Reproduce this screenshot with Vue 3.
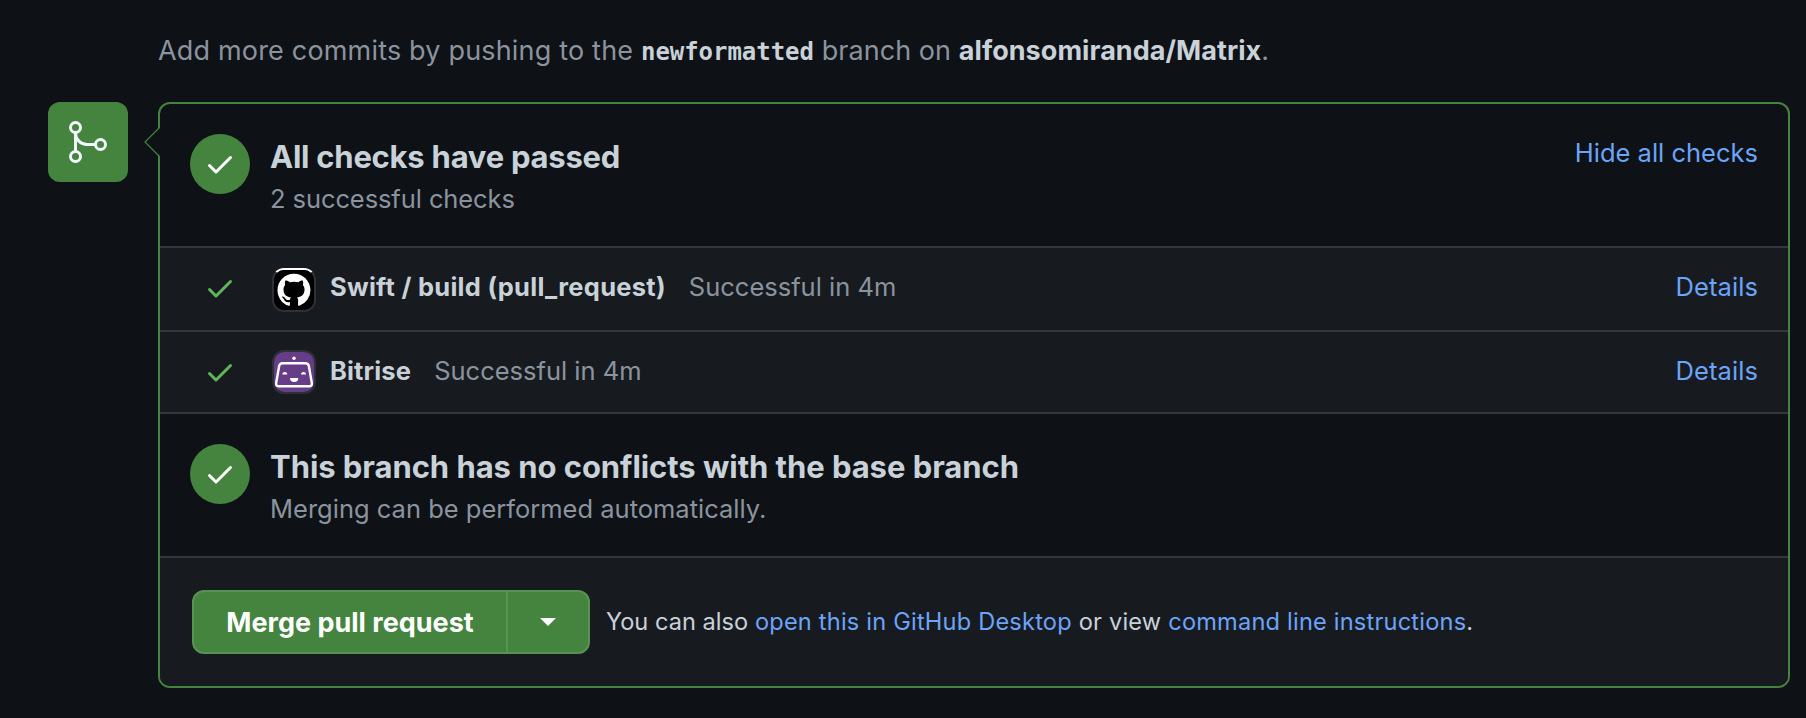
<script setup>
const checks = [
  { name: 'Swift / build (pull_request)', note: 'Successful in 4m', app: 'github' },
  { name: 'Bitrise', note: 'Successful in 4m', app: 'bitrise' },
]
const CHECK =
  'M13.78 4.22a.75.75 0 010 1.06l-7.25 7.25a.75.75 0 01-1.06 0L2.22 9.28a.75.75 0 011.06-1.06L6 10.94l6.72-6.72a.75.75 0 011.06 0z'
</script>

<template>
  <main class="page">
    <p class="push-hint">
      Add more commits by pushing to the&nbsp;<code>newformatted</code>&nbsp;<span class="mid">branch on</span>&nbsp;<strong>alfonsomiranda/Matrix</strong>.
    </p>
    <div class="merge">
      <div class="badge">
        <svg width="48" height="48" viewBox="0 0 24 24" fill="none" stroke="#f3f6fd" stroke-width="1.5">
          <circle cx="5.75" cy="4.75" r="2.5" />
          <circle cx="5.75" cy="19.25" r="2.5" />
          <circle cx="18.25" cy="13.25" r="2.5" />
          <path d="M5.75 7.25v9.5M5.75 7.5c0 3.2 2.6 5.75 5.75 5.75h4.25" />
        </svg>
      </div>
      <section class="box">
        <svg class="notch" width="18" height="32" viewBox="0 0 18 32">
          <path d="M18 1.5H16L1 16l15 14.5h2z" fill="#0e1116" />
          <path d="M15.5 1.5L1 16l14.5 14.5" fill="none" stroke="#45843f" stroke-width="1.2" />
        </svg>
        <div class="status first">
          <span class="circle"><svg width="32" height="32" viewBox="0 0 16 16"><path :d="CHECK" fill="#fff" /></svg></span>
          <div class="copy">
            <h3>All checks have passed</h3>
            <p>2 successful checks</p>
          </div>
          <a class="hide">Hide all checks</a>
        </div>
        <div v-for="c in checks" :key="c.name" class="check" :class="c.app">
          <svg class="tick" width="32" height="32" viewBox="0 0 16 16"><path :d="CHECK" fill="#5fb757" /></svg>
          <span class="avatar">
            <svg v-if="c.app === 'github'" width="40" height="40" viewBox="0 0 40 40">
              <rect width="40" height="40" fill="#000" />
              <path transform="translate(3.5 3.7) scale(2.06)" fill="#fff" d="M8 0C3.580 0 0 3.580 0 8c0 3.540 2.290 6.530 5.470 7.590.4.070.55-.170.55-.380 0-.190-.010-.820-.010-1.490-2.010.370-2.530-.490-2.690-.940-.090-.230-.480-.940-.820-1.130-.280-.150-.680-.520-.010-.530.630-.010 1.080.580 1.230.820.720 1.210 1.870.870 2.330.660.070-.520.280-.870.510-1.070-1.780-.2-3.640-.890-3.640-3.950 0-.870.310-1.590.820-2.150-.080-.2-.360-1.020.080-2.120 0 0 .670-.210 2.200.820.640-.180 1.320-.270 2-.270s1.360.090 2 .270c1.530-1.040 2.200-.820 2.200-.820.440 1.100.160 1.920.080 2.120.510.560.820 1.270.820 2.150 0 3.070-1.870 3.750-3.650 3.950.290.250.540.730.540 1.480 0 1.070-.010 1.930-.010 2.200 0 .210.150.460.550.380A8.010 8.010 0 0016 8c0-4.420-3.580-8-8-8z" />
            </svg>
            <svg v-else width="40" height="40" viewBox="0 0 40 40">
              <rect width="40" height="40" fill="#683d87" />
              <circle cx="20" cy="6.2" r="1.7" fill="#fff" />
              <path d="M8.500 11.200h23c1.900 0 2.900 1 3.300 2.600l3 17c.4 2.300-.6 3.500-2.800 3.500h-30c-2.200 0-3.200-1.200-2.800-3.500l3-17c.4-1.600 1.400-2.600 3.300-2.600z" fill="none" stroke="#fff" stroke-width="2.4" />
              <path d="M8.300 22.500a2.500 2.500 0 015 0M27 22.500a2.500 2.500 0 015 0" fill="#fff" />
              <path d="M16 26h8.300a4.150 4 0 01-8.300 0z" fill="#fff" />
            </svg>
          </span>
          <strong>{{ c.name }}</strong>
          <span class="note">{{ c.note }}</span>
          <a class="details">Details</a>
        </div>
        <div class="status last">
          <span class="circle"><svg width="32" height="32" viewBox="0 0 16 16"><path :d="CHECK" fill="#fff" /></svg></span>
          <div class="copy">
            <h3>This branch has no conflicts with the base branch</h3>
            <p>Merging can be performed automatically.</p>
          </div>
        </div>
        <footer class="actions">
          <div class="group">
            <button class="main-btn" type="button">Merge pull request</button>
            <button class="drop" type="button" aria-label="More"><i class="caret"></i></button>
          </div>
          <p class="also"><span class="you">You can also</span>&nbsp;<a>open this in GitHub Desktop</a>&nbsp;or view&nbsp;<a>command line instructions</a>.</p>
        </footer>
      </section>
    </div>
  </main>
</template>

<style>
body {
  background: #0e1116;
}
</style>

<style scoped>
.page {
  box-sizing: border-box;
  height: 718px;
  padding: 31px 16px 0 48px;
  background: #0e1116;
  color: #c9d1d9;
  font: 25.5px/40px Inter, "Liberation Sans", sans-serif;
  overflow: hidden;
}
h3,
p {
  margin: 0;
  white-space: nowrap;
}
a {
  color: #6ca4f8;
}
strong {
  font-weight: 700;
}
.push-hint {
  height: 71px;
  padding-left: 110px;
  color: #8b949e;
  font-size: 27px;
  letter-spacing: 0.18px;
}
.push-hint strong,
.push-hint code {
  color: #c9d1d9;
}
.push-hint strong {
  letter-spacing: 0.05px;
}
.push-hint code {
  font: 700 24px/1 "DejaVu Sans Mono", monospace;
  letter-spacing: -0.04px;
}
.mid {
  letter-spacing: 0.05px;
}
.merge {
  display: flex;
  gap: 30px;
  align-items: flex-start;
}
.badge {
  display: flex;
  align-items: center;
  justify-content: center;
  width: 80px;
  height: 80px;
  border-radius: 12px;
  background: #45843f;
}
.box {
  position: relative;
  flex: 1;
  box-sizing: border-box;
  height: 586px;
  border: 2px solid #45843f;
  border-radius: 12px;
}
.notch {
  position: absolute;
  left: -16px;
  top: 22px;
}
.status {
  display: flex;
  box-sizing: border-box;
  height: 142px;
  padding: 30px 30px 0;
}
.circle {
  display: flex;
  align-items: center;
  justify-content: center;
  width: 60px;
  height: 60px;
  border-radius: 50%;
  background: #45843f;
}
.copy {
  margin: 1px 0 0 20px;
}
h3 {
  font-size: 31px;
  font-weight: 700;
  line-height: 44px;
  letter-spacing: -0.05px;
}
.first h3 {
  letter-spacing: -0.24px;
}
.copy p {
  color: #8b949e;
}
.first p {
  letter-spacing: -0.09px;
}
.hide {
  margin: -1px 0 0 auto;
}
.check {
  display: flex;
  box-sizing: border-box;
  height: 84px;
  padding: 19px 30px 0 44px;
  border-top: 2px solid #32363d;
  background: #171b20;
}
.check.bitrise {
  height: 82px;
}
.check strong {
  letter-spacing: 0.27px;
}
.tick {
  margin-top: 5px;
}
.avatar {
  box-sizing: border-box;
  width: 44px;
  height: 44px;
  margin: 1px 14px 0 36px;
  border: 2px solid #2c3037;
  border-radius: 12px;
  overflow: hidden;
}
.github .avatar {
  border-top-color: #fff;
}
.bitrise .avatar {
  margin-top: -1px;
}
.bitrise strong {
  letter-spacing: 0.15px;
}
.avatar svg {
  display: block;
}
.note {
  margin-left: 23px;
  color: #8b949e;
}
.details {
  margin-left: auto;
  letter-spacing: 0.1px;
}
.last {
  height: 144px;
  border-top: 2px solid #32363d;
}
.actions {
  display: flex;
  box-sizing: border-box;
  height: 130px;
  padding: 32px 30px 0 32px;
  border-top: 2px solid #32363d;
  border-radius: 0 0 10px 10px;
  background: #171b20;
}
.group {
  display: flex;
  box-sizing: border-box;
  width: 398px;
  height: 64px;
  border: 2px solid #579352;
  border-radius: 12px;
  background: #45843f;
}
button {
  padding: 0;
  border: 0;
  background: none;
  color: #fff;
  font: 700 27px/1 Inter, "Liberation Sans", sans-serif;
}
.main-btn {
  width: 314px;
  border-right: 2px solid #579352;
}
.drop {
  display: flex;
  flex: 1;
  align-items: center;
  justify-content: center;
}
.caret {
  border: 8px solid transparent;
  border-top-color: #fff;
  border-bottom: 0;
}
.also {
  margin: 12px 0 0 16px;
  font-size: 23.6px;
  letter-spacing: 0.2px;
}
.you {
  letter-spacing: 0;
}
</style>
